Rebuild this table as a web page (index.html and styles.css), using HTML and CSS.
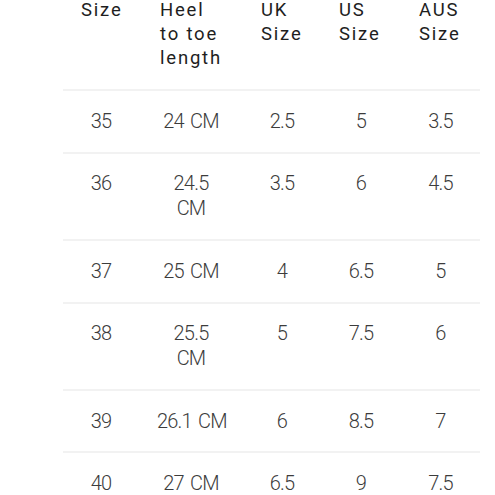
FILE: index.html
```html
<!DOCTYPE html>
<html lang="en">
<head>
<meta charset="utf-8">
<title>Size chart</title>
<link rel="stylesheet" href="styles.css">
</head>
<body>
<table class="chart">
  <colgroup>
    <col class="c1"><col class="c2"><col class="c3"><col class="c4"><col class="c5">
  </colgroup>
  <thead>
    <tr>
      <th>Size</th>
      <th class="wide">Heel<br>to toe<br>length</th>
      <th>UK<br>Size</th>
      <th>US<br>Size</th>
      <th>AUS<br>Size</th>
    </tr>
  </thead>
  <tbody>
    <tr><td>35</td><td>24 CM</td><td>2.5</td><td>5</td><td>3.5</td></tr>
    <tr><td>36</td><td>24.5<br>CM</td><td>3.5</td><td>6</td><td>4.5</td></tr>
    <tr><td>37</td><td>25 CM</td><td>4</td><td>6.5</td><td>5</td></tr>
    <tr><td>38</td><td>25.5<br>CM</td><td>5</td><td>7.5</td><td>6</td></tr>
    <tr><td>39</td><td>26.1 CM</td><td>6</td><td>8.5</td><td>7</td></tr>
    <tr><td>40</td><td>27 CM</td><td>6.5</td><td>9</td><td>7.5</td></tr>
  </tbody>
</table>
</body>
</html>
```
FILE: styles.css
```css
html, body {
  margin: 0;
  padding: 0;
  background: #fff;
}
body {
  font-family: Roboto, "Liberation Sans", sans-serif;
  overflow: hidden;
}
.chart {
  margin: -20px 0 0 63px;
  width: 417px;
  table-layout: fixed;
  border-collapse: collapse;
}
.c1 { width: 76px; }
.c2 { width: 104px; }
.c3 { width: 78px; }
.c4 { width: 80px; }
.c5 { width: 79px; }
.chart th,
.chart td {
  padding: 17.7px 18px;
  vertical-align: top;
  border-bottom: 2px solid #f2f2f2;
  white-space: nowrap;
}
.chart th {
  text-align: left;
  font-weight: 400;
  font-size: 18.5px;
  line-height: 24px;
  letter-spacing: 1.8px;
  color: #1e1e1e;
  padding-bottom: 19.7px;
}
.chart th.wide {
  padding-left: 21px;
}
.chart td {
  text-align: center;
  font-weight: 300;
  font-size: 20px;
  line-height: 25px;
  letter-spacing: -0.8px;
  word-spacing: 2px;
  color: #3c3c3c;
}
```
